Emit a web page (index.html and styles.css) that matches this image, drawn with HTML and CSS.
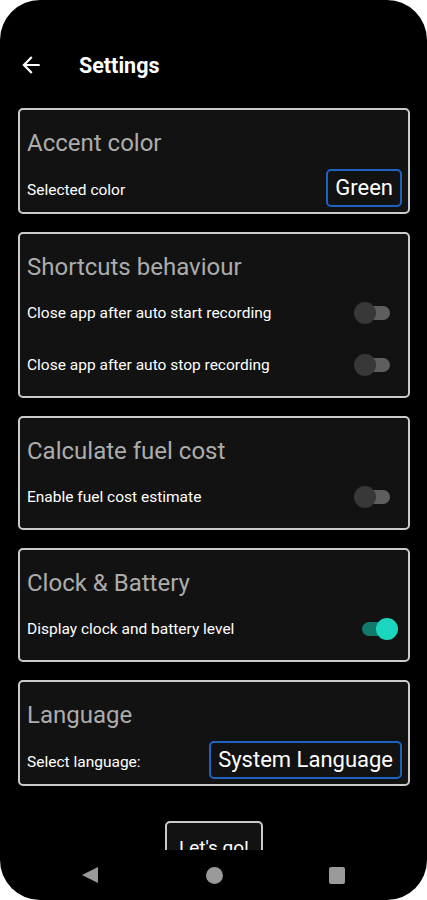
FILE: index.html
```html
<!DOCTYPE html>
<html lang="en">
<head>
    <meta charset="UTF-8">
    <title>Settings</title>
    <link rel="stylesheet" href="styles.css">
</head>
<body>
<div class="phone">
    <div class="screen">
        <div class="topbar">
            <svg class="back" viewBox="0 0 24 24" width="26" height="26"><path d="M20 11H7.83l5.59-5.59L12 4l-8 8 8 8 1.41-1.41L7.83 13H20v-2z" fill="#fff"/></svg>
            <span class="title">Settings</span>
        </div>

        <div class="card">
            <div class="card-title">Accent color</div>
            <div class="row pick">
                <span>Selected color</span>
                <span class="select">Green</span>
            </div>
        </div>

        <div class="card">
            <div class="card-title">Shortcuts behaviour</div>
            <div class="row">
                <span>Close app after auto start recording</span>
                <span class="switch"></span>
            </div>
            <div class="row">
                <span>Close app after auto stop recording</span>
                <span class="switch"></span>
            </div>
        </div>

        <div class="card">
            <div class="card-title">Calculate fuel cost</div>
            <div class="row">
                <span>Enable fuel cost estimate</span>
                <span class="switch"></span>
            </div>
        </div>

        <div class="card">
            <div class="card-title">Clock &amp; Battery</div>
            <div class="row">
                <span>Display clock and battery level</span>
                <span class="switch on"></span>
            </div>
        </div>

        <div class="card">
            <div class="card-title">Language</div>
            <div class="row pick">
                <span>Select language:</span>
                <span class="select">System Language</span>
            </div>
        </div>

        <div class="go-wrap">
            <span class="go">Let's go!</span>
        </div>
    </div>
    <div class="navbar">
        <svg viewBox="0 0 18 18" width="18" height="18"><path d="M17 1L1 9l16 8z" fill="#9a9a9a"/></svg>
        <span class="nav-home"></span>
        <span class="nav-recent"></span>
    </div>
</div>
</body>
</html>
```

FILE: styles.css
```css
html,body{ margin:0; padding:0; background:#fff; }
body{ font-family: Roboto, "Noto Sans", sans-serif; }

.phone{
    height: 900px;
    background: #000;
    border-radius: 40px;
    overflow: hidden;
    display: flex;
    flex-direction: column;
}
.screen{
    flex: 1;
    overflow: hidden;
    padding: 37px 17px 0 18px;
}

.topbar{
    height: 56px;
    display: flex;
    align-items: center;
    margin-bottom: 15px;
}
.back{ margin-right: 35px; }
.topbar .title{
    color: #fff;
    font-size: 21.5px;
    font-weight: 700;
}

.card{
    background: #121212;
    border: 2px solid #cbcbcb;
    border-radius: 5px;
    padding: 19px 6px 5px 7px;
    margin-bottom: 18px;
}
.card-title{
    color: #acacac;
    font-size: 24px;
    line-height: 28px;
    margin-bottom: 6px;
}
.row{
    height: 52px;
    display: flex;
    align-items: center;
    justify-content: space-between;
    color: #fff;
    font-size: 15.5px;
}
.row.pick{
    height: 38px;
    margin-top: 12px;
    align-items: baseline;
}

.select{
    height: 34px;
    line-height: 34px;
    border: 2px solid #1f63c2;
    border-radius: 5px;
    padding: 0 7px;
    font-size: 22px;
    color: #fff;
}

.switch{
    position: relative;
    width: 44px;
    height: 22px;
    margin-right: 4px;
}
.switch::before{
    content: "";
    position: absolute;
    left: 8px;
    right: 8px;
    top: 4px;
    height: 14px;
    border-radius: 7px;
    background: #5e5e5e;
}
.switch::after{
    content: "";
    position: absolute;
    left: 0;
    top: 0;
    width: 22px;
    height: 22px;
    border-radius: 50%;
    background: #383838;
}
.switch.on::before{ background: #127a6d; }
.switch.on::after{ left: 22px; background: #1bd6bf; }

.go-wrap{
    display: flex;
    justify-content: center;
    padding-top: 17px;
}
.go{
    width: 94px;
    height: 52px;
    line-height: 50px;
    text-align: center;
    border: 2px solid #cbcbcb;
    border-radius: 5px;
    background: #121212;
    color: #fff;
    font-size: 19px;
}

.navbar{
    height: 50px;
    display: flex;
    align-items: center;
    justify-content: space-between;
    padding: 0 82px 0 81px;
}
.nav-home{
    width: 17px;
    height: 17px;
    border-radius: 50%;
    background: #9a9a9a;
}
.nav-recent{
    width: 16px;
    height: 17px;
    border-radius: 2px;
    background: #9a9a9a;
}
```
